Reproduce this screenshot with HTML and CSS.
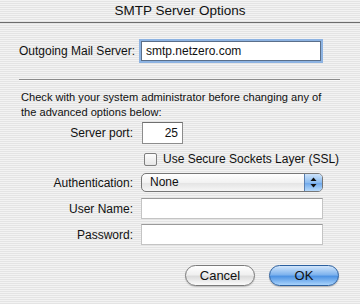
FILE: index.html
```html
<!DOCTYPE html>
<html lang="en">
<head>
    <meta charset="UTF-8">
    <meta name="viewport" content="width=device-width, initial-scale=1.0">
    <title>SMTP Server Options</title>
    <link rel="stylesheet" href="styles.css">
</head>
<body>

<div class="window">
    <div class="titlebar">SMTP Server Options</div>

    <div class="server-row">
        <label for="smtp-host">Outgoing Mail Server:</label>
        <input type="text" id="smtp-host" class="field focused" value="smtp.netzero.com">
    </div>

    <div class="separator"></div>

    <p class="note">Check with your system administrator before changing any of<br>the advanced options below:</p>

    <div class="form-row port-row">
        <label class="row-label" for="port">Server port:</label>
        <input type="text" id="port" class="field port" value="25">
    </div>

    <div class="form-row check-row">
        <span class="row-label"></span>
        <label class="check"><span class="box"></span>Use Secure Sockets Layer (SSL)</label>
    </div>

    <div class="form-row auth-row">
        <label class="row-label">Authentication:</label>
        <div class="popup">
            <span class="popup-text">None</span>
            <span class="popup-arrows">
                <svg width="7" height="11" viewBox="0 0 7 11">
                    <path d="M3.5 0.5 L6.5 4 L0.5 4 Z" fill="#111"/>
                    <path d="M3.5 10.5 L6.5 7 L0.5 7 Z" fill="#111"/>
                </svg>
            </span>
        </div>
    </div>

    <div class="form-row user-row">
        <label class="row-label" for="user">User Name:</label>
        <input type="text" id="user" class="field wide">
    </div>

    <div class="form-row pass-row">
        <label class="row-label" for="pass">Password:</label>
        <input type="password" id="pass" class="field wide">
    </div>

    <div class="buttons">
        <button class="btn cancel">Cancel</button>
        <button class="btn ok">OK</button>
    </div>
</div>

</body>
</html>
```

FILE: styles.css
```css
html, body {
    margin: 0;
    padding: 0;
}
body {
    width: 360px;
    height: 304px;
    overflow: hidden;
    font-family: "Liberation Sans", Arial, sans-serif;
    font-size: 12px;
    color: #111;
    background: repeating-linear-gradient(to bottom, #f3f3f3 0 1px, #e4e4e4 1px 2px);
}
.window {
    position: relative;
    height: 304px;
}
label, .popup-text, .note {
    white-space: nowrap;
}
.titlebar {
    height: 22px;
    line-height: 22px;
    text-align: center;
    font-size: 13.5px;
    border-bottom: 1px solid #6d6d6d;
}
.server-row {
    display: flex;
    align-items: center;
    margin-top: 18px;
    padding-left: 19px;
}
.server-row label {
    width: 115px;
    margin-right: 7px;
}
.field {
    box-sizing: border-box;
    font-family: "Liberation Sans", Arial, sans-serif;
    font-size: 12px;
    color: #111;
    background: #fff;
    border: 1px solid #8c8c8c;
    border-top-color: #6f6f6f;
    margin: 0;
    padding: 0 4px;
    outline: none;
}
.field.focused {
    width: 180px;
    height: 20px;
    border-color: #5a6f8a;
    box-shadow: 0 0 0 2px #8db3e2;
}
.separator {
    height: 1px;
    margin: 18px 20px 0 19px;
    background: #8a8a8a;
    border-bottom: 1px solid #fafafa;
}
.note {
    margin: 9px 0 0 21px;
    font-size: 11.1px;
    line-height: 15px;
}
.form-row {
    display: flex;
    align-items: center;
}
.row-label {
    width: 133px;
    text-align: right;
    margin-right: 8px;
    flex-shrink: 0;
}
.port-row {
    margin-top: 2px;
}
.field.port {
    width: 41px;
    height: 22px;
    text-align: right;
    margin-left: 1px;
}
.check-row {
    margin-top: 7px;
    height: 16px;
}
.check {
    display: flex;
    align-items: center;
    margin-left: 3px;
}
.box {
    flex-shrink: 0;
    width: 11px;
    height: 11px;
    border: 1px solid #7e7e7e;
    border-radius: 2px;
    background: linear-gradient(#fdfdfd, #e6e6e6);
    margin-right: 6px;
}
.auth-row {
    margin-top: 6px;
}
.popup {
    display: flex;
    width: 182px;
    height: 19px;
    box-sizing: border-box;
    border: 1px solid #777;
    border-radius: 5px;
    overflow: hidden;
    background: linear-gradient(#ffffff, #f2f2f2 50%, #e3e3e3 51%, #f6f6f6);
}
.popup-text {
    flex: 1;
    line-height: 17px;
    padding-left: 8px;
}
.popup-arrows {
    width: 17px;
    display: flex;
    align-items: center;
    justify-content: center;
    border-left: 1px solid #5a7fb0;
    background: linear-gradient(#cde3fa, #8cbcf0 50%, #6aa5ea 51%, #b7dafb);
}
.user-row {
    margin-top: 6px;
}
.pass-row {
    margin-top: 5px;
}
.field.wide {
    width: 182px;
    height: 21px;
    border-color: #c4c4c4;
    border-top-color: #9a9a9a;
}
.buttons {
    display: flex;
    justify-content: flex-end;
    gap: 14px;
    margin-top: 20px;
    padding-right: 21px;
}
.btn {
    width: 70px;
    height: 21px;
    border-radius: 11px;
    font-family: "Liberation Sans", Arial, sans-serif;
    font-size: 13px;
    color: #111;
    padding: 0;
    cursor: pointer;
}
.btn.cancel {
    border: 1px solid #7a7a7a;
    background: linear-gradient(#ffffff, #f0f0f0 45%, #dcdcdc 55%, #fbfbfb);
    box-shadow: 0 1px 1px rgba(0, 0, 0, 0.2);
}
.btn.ok {
    border: 1px solid #2b5f9e;
    background: linear-gradient(#d2e6fb, #80b4ee 45%, #4f94e4 55%, #a9d3fb);
    box-shadow: 0 1px 1px rgba(0, 0, 0, 0.25);
}
```
